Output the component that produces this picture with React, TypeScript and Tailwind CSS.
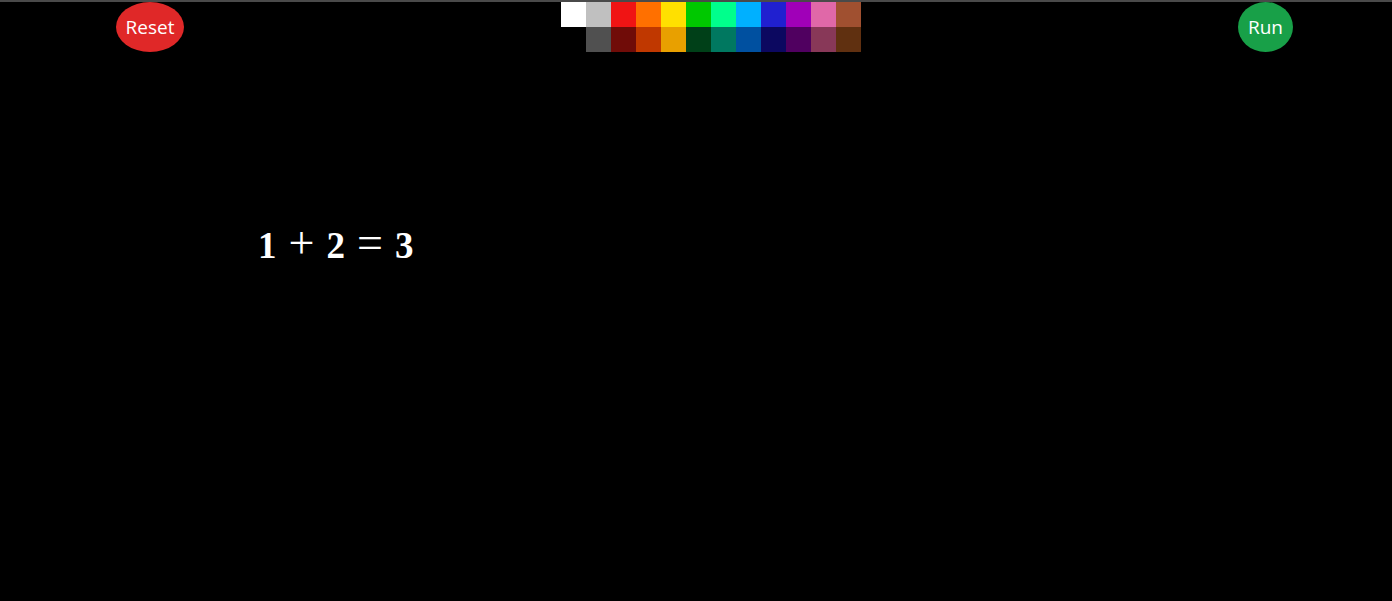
// カラーパレット付きキャンバス画面
const topRow = ["#ffffff", "#c0c0c0", "#f01414", "#ff7000", "#ffe000", "#00c800", "#00ff8c", "#00b0ff", "#2020d0", "#a000b8", "#e068a8", "#a05030"];
const bottomRow = ["#000000", "#505050", "#700c08", "#c03800", "#e8a000", "#004018", "#007860", "#0050a0", "#0c0860", "#500060", "#883858", "#603010"];

const Palette = () => (
  <div className="flex flex-col">
    {[topRow, bottomRow].map((row, i) => (
      <div key={i} className="flex">
        {row.map((c) => (
          <div key={c} className="w-[25px] h-[25px]" style={{ backgroundColor: c }} />
        ))}
      </div>
    ))}
  </div>
);

export default function App() {
  return (
    <div className="w-[1392px] h-[601px] bg-black overflow-hidden flex flex-col">
      <div className="h-[2px] bg-[#4a4a4a]" />
      {/* ツールバー */}
      <div className="flex items-start justify-between pl-[116px] pr-[99px]">
        <button className="w-[68px] h-[50px] rounded-[50%] bg-[#e02828] text-white text-[19px] font-['Open_Sans',sans-serif]">
          Reset
        </button>
        <Palette />
        <button className="w-[55px] h-[50px] rounded-[50%] bg-[#18a048] text-white text-[19px] font-['Open_Sans',sans-serif]">
          Run
        </button>
      </div>
      {/* 数式 */}
      <div className="pl-[258px] pt-[168px] flex items-baseline gap-[12px] text-white leading-none font-['Liberation_Serif',serif]">
        <span className="font-bold text-[37px]">1</span>
        <span className="text-[46px]">+</span>
        <span className="font-bold text-[37px]">2</span>
        <span className="text-[46px]">=</span>
        <span className="font-bold text-[37px]">3</span>
      </div>
    </div>
  );
}
